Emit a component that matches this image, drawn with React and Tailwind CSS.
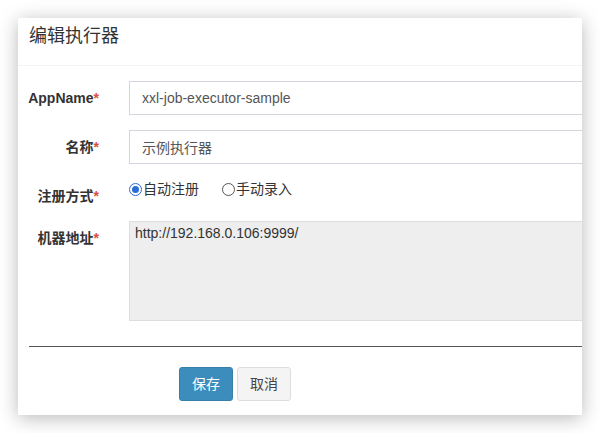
import { useState } from 'react'

/**
 * Modal para editar un ejecutor
 */
function Etiqueta({ texto }) {
  return (
    <label className="w-[96px] shrink-0 pr-[15px] pt-[7px] text-right text-[14px] font-bold leading-[20px] text-[#333]">
      {texto}
      <span className="text-[#dd4b39]">*</span>
    </label>
  )
}

function Radio({ checked, texto, onClick }) {
  return (
    <button type="button" onClick={onClick} className="flex items-center text-[14px] leading-[20px] text-[#333]">
      {checked ? (
        <span className="mr-[1px] flex h-[13px] w-[13px] items-center justify-center rounded-full border border-[#2b6fd6] bg-white">
          <span className="h-[7px] w-[7px] rounded-full bg-[#2b6fd6]" />
        </span>
      ) : (
        <span className="mr-[1px] h-[13px] w-[13px] rounded-full border border-[#555] bg-white" />
      )}
      {texto}
    </button>
  )
}

export default function App() {
  const [registro, setRegistro] = useState(0)

  return (
    <div className="h-[433px] w-[600px] bg-white p-[18px] font-['Liberation_Sans','Noto_Sans_CJK_SC',sans-serif]">
      <div className="flex h-[397px] w-[564px] flex-col overflow-hidden bg-white shadow-[0_3px_18px_rgba(0,0,0,0.28)]">
        {/* Cabecera */}
        <div className="h-[48px] shrink-0 border-b border-[#f4f4f4] pl-[11px] pt-[8px]">
          <h4 className="text-[18px] leading-[21px] text-[#333]">编辑执行器</h4>
        </div>

        {/* Formulario */}
        <div className="flex flex-col gap-[15px] pt-[15px]">
          <div className="flex">
            <Etiqueta texto="AppName" />
            <input
              defaultValue="xxl-job-executor-sample"
              className="ml-[15px] h-[34px] w-[480px] shrink-0 border border-[#d2d6de] px-[12px] text-[14px] text-[#555] outline-none"
            />
          </div>
          <div className="flex">
            <Etiqueta texto="名称" />
            <input
              defaultValue="示例执行器"
              className="ml-[15px] h-[34px] w-[480px] shrink-0 border border-[#d2d6de] px-[12px] text-[14px] text-[#555] outline-none"
            />
          </div>
          <div className="flex">
            <Etiqueta texto="注册方式" />
            <div className="ml-[15px] flex h-[20px] items-center gap-[23px]">
              <Radio checked={registro === 0} texto="自动注册" onClick={() => setRegistro(0)} />
              <Radio checked={registro === 1} texto="手动录入" onClick={() => setRegistro(1)} />
            </div>
          </div>
          <div className="flex">
            <Etiqueta texto="机器地址" />
            <textarea
              readOnly
              defaultValue="http://192.168.0.106:9999/"
              className="ml-[15px] h-[100px] w-[480px] shrink-0 resize-none border border-[#ddd] bg-[#eee] px-[5px] pt-[1px] text-[14px] leading-[20px] text-[#333] outline-none"
            />
          </div>
        </div>

        {/* Línea divisoria */}
        <div className="ml-[11px] mt-[25px] h-px shrink-0 bg-[#555]" />

        {/* Botones */}
        <div className="flex gap-[4px] pl-[161px] pt-[20px]">
          <button className="h-[34px] w-[54px] rounded-[3px] border border-[#367fa9] bg-[#3c8dbc] text-[14px] text-white">
            保存
          </button>
          <button className="h-[34px] w-[54px] rounded-[3px] border border-[#ddd] bg-[#f4f4f4] text-[14px] text-[#444]">
            取消
          </button>
        </div>
      </div>
    </div>
  )
}
